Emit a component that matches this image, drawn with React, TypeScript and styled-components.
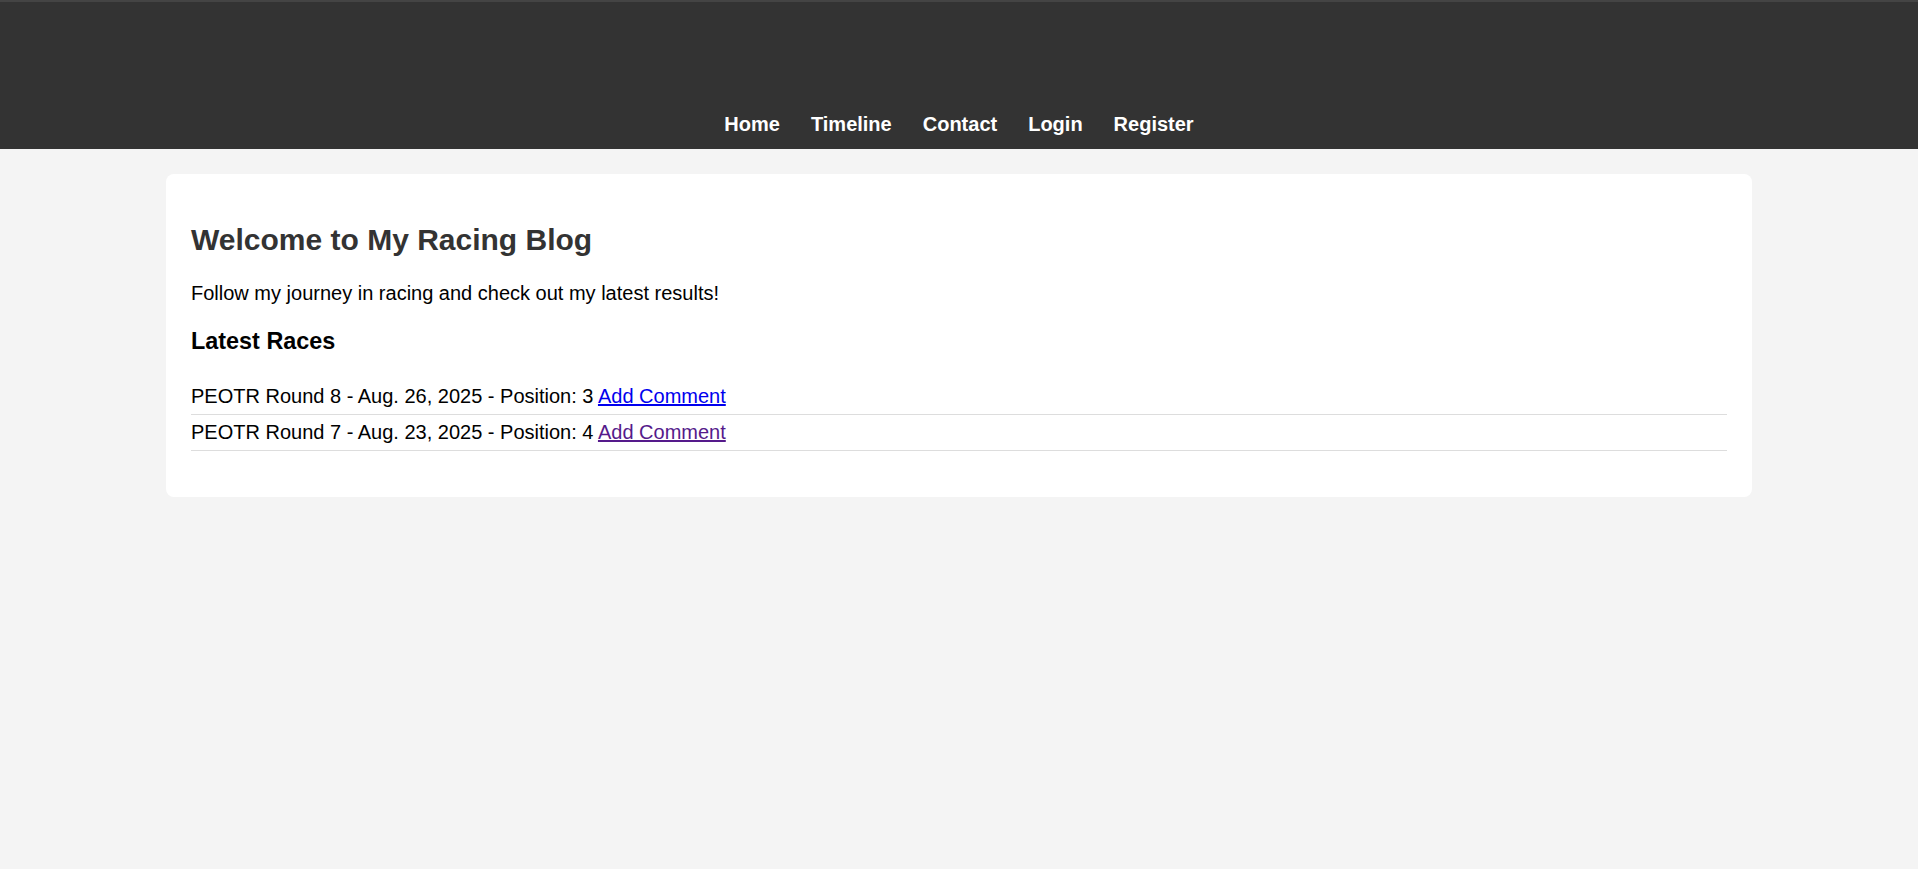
import styled, { createGlobalStyle } from "styled-components";

interface RaceType {
  id: number;
  name: string;
  date: string;
  position: number;
  visited: boolean;
}

const races: RaceType[] = [
  { id: 8, name: "PEOTR Round 8", date: "Aug. 26, 2025", position: 3, visited: false },
  { id: 7, name: "PEOTR Round 7", date: "Aug. 23, 2025", position: 4, visited: true },
];

const navLinks = ["Home", "Timeline", "Contact", "Login", "Register"];

const GlobalStyle = createGlobalStyle`
  html, body {
    margin: 0;
    padding: 0;
  }
  body {
    background-color: #f4f4f4;
    font-family: "Liberation Sans", Arial, sans-serif;
    font-size: 20px;
    color: #000;
  }
`;

const Header = styled.header`
  height: 149px;
  box-sizing: border-box;
  background-color: #333;
  border-top: 2px solid #444;
  display: flex;
  align-items: flex-end;
  justify-content: center;
  padding-bottom: 13px;
`;

const Nav = styled.nav`
  display: flex;
  gap: 31px;
`;

const NavLink = styled.a`
  color: #fff;
  font-weight: bold;
  font-size: 20px;
  line-height: 23px;
  text-decoration: none;
`;

const Container = styled.main`
  width: 1586px;
  box-sizing: border-box;
  margin: 25px auto;
  padding: 25px;
  background-color: #fff;
  border-radius: 8px;
`;

const Title = styled.h2`
  color: #333;
  font-size: 30px;
  margin: 24px 0 25px;
`;

const Intro = styled.p`
  margin: 20px 0;
`;

const SubTitle = styled.h3`
  font-size: 23.4px;
  margin: 23.4px 0;
`;

const RaceList = styled.ul`
  list-style: none;
  padding: 0;
  margin: 20px 0 21px;
`;

const RaceItem = styled.li`
  padding: 6px 0;
  line-height: 23px;
  border-bottom: 1px solid #ddd;
`;

const CommentLink = styled.a<{ $visited?: boolean }>`
  color: ${(p) => (p.$visited ? "#551a8b" : "#0000ee")};
  text-decoration: underline;
`;

function App() {
  return (
    <>
      <GlobalStyle />
      <Header>
        <Nav>
          {navLinks.map((link) => (
            <NavLink href="#" key={link}>
              {link}
            </NavLink>
          ))}
        </Nav>
      </Header>
      <Container>
        <Title>Welcome to My Racing Blog</Title>
        <Intro>Follow my journey in racing and check out my latest results!</Intro>
        <SubTitle>Latest Races</SubTitle>
        <RaceList>
          {races.map((race) => (
            <RaceItem key={race.id}>
              {race.name} - {race.date} - Position: {race.position}{" "}
              <CommentLink href="#" $visited={race.visited}>
                Add Comment
              </CommentLink>
            </RaceItem>
          ))}
        </RaceList>
      </Container>
    </>
  );
}

export default App;
